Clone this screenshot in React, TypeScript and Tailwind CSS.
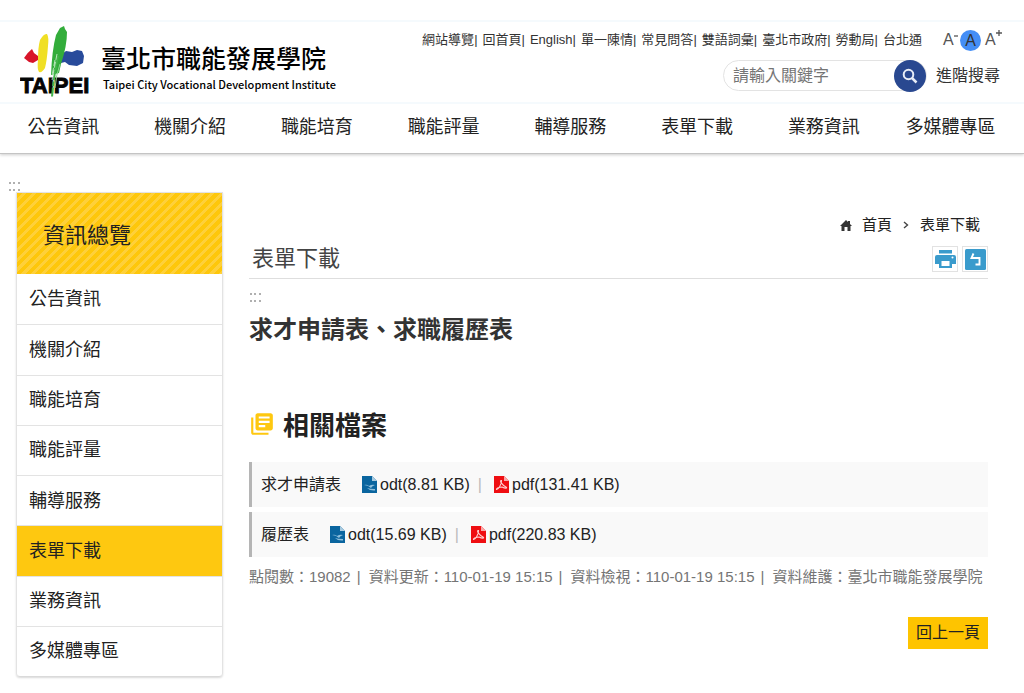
import React from 'react';

const topLinks = ['網站導覽', '回首頁', 'English', '單一陳情', '常見問答', '雙語詞彙', '臺北市政府', '勞動局', '台北通'];

const sections = ['公告資訊', '機關介紹', '職能培育', '職能評量', '輔導服務', '表單下載', '業務資訊', '多媒體專區'];

const files = [
  { name: '求才申請表', odt: '8.81 KB', pdf: '131.41 KB' },
  { name: '履歷表', odt: '15.69 KB', pdf: '220.83 KB' },
];

const meta = ['點閱數：19082', '資料更新：110-01-19 15:15', '資料檢視：110-01-19 15:15', '資料維護：臺北市職能發展學院'];

function TaipeiLogo() {
  return (
    <svg width="70" height="72" viewBox="0 0 70 72" aria-hidden="true">
      <path d="M4 32 Q8 26 12 23 L14 27 L18 30 L18 34 L13 37 L9 36 Z" fill="#d8152a" />
      <path d="M20 14 Q24 7 27 8 Q29 11 28 20 Q27 34 25 42 Q22 47 19 46 Q17 43 18 34 Q18 21 20 14Z" fill="#f0df25" />
      <path d="M42 28 L46 25 L52 26 L57 24 L62 25 L64 30 L63 37 L57 40 L49 39 L45 36 L41 37 L40 33 Z" fill="#284b9b" />
      <path d="M36 9 L40 2 L44 0 L45 3 L47 6 Q47 20 41 38 L39 47 L31 49 Q32 24 36 9Z" fill="#33ad3b" />
      <text x="0" y="67" fontFamily="'Liberation Sans', sans-serif" fontWeight="700" fontSize="22" fill="#050505" stroke="#050505" strokeWidth="0.9">TAIPEI</text>
      <path d="M38 30 Q34 48 32 71" stroke="#43b54a" strokeWidth="2" strokeDasharray="9 1 5 1" fill="none" />
      <path d="M40 38 Q36 49 35 62" stroke="#8ed391" strokeWidth="1" fill="none" />
      <path d="M37 28 L32 54M35 34L32 50" stroke="#d9f1da" strokeWidth="0.8" strokeDasharray="6 2" />
    </svg>
  );
}

function OdtIcon() {
  return (
    <svg width="15" height="17" viewBox="0 0 15 17" aria-hidden="true">
      <path d="M0 0H10L15 5V17H0Z" fill="#0a659f" />
      <path d="M10 0V5H15Z" fill="#a9cbe0" />
      <path d="M2 9Q5 8 7 10Q10 8 13 9Q10 10 9 12Q6 9 2 9ZM5 12Q8 13 13 13V14.500Q8 15 5 12Z" fill="#8fbfdc" />
    </svg>
  );
}

function PdfIcon() {
  return (
    <svg width="15" height="17" viewBox="0 0 15 17" aria-hidden="true">
      <path d="M0 0H10L15 5V17H0Z" fill="#ef0e12" />
      <path d="M10 0V5H15Z" fill="#f9a9a9" />
      <path d="M7 4.500C5.500 5 8 9 12 11C14 12.500 11 12.500 8 11C5.500 11 2 12.500 2.500 13.500C4 14 8 8 7.500 4.500Z" fill="none" stroke="#ffd0d0" strokeWidth="1.100" />
    </svg>
  );
}

function PrintIcon() {
  return (
    <svg width="21" height="19" viewBox="0 0 21 19" aria-hidden="true">
      <path d="M4 0H17V3.500H4ZM2 5H19Q21 5 21 7V14H17V10H4V14H0V7Q0 5 2 5Z" fill="#3a9bcc" />
      <path d="M4 9H17V18H4Z" fill="#3a9bcc" />
      <path d="M6.500 11H14.500V16H6.500Z" fill="#fff" />
      <circle cx="17.500" cy="7.500" r="1" fill="#fff" />
    </svg>
  );
}

function BackIcon() {
  return (
    <svg width="21" height="21" viewBox="0 0 21 21" aria-hidden="true">
      <rect width="21" height="21" rx="1.500" fill="#3a9bcc" />
      <path d="M8.500 4.500L6.500 9H14.500V15.500H10.500" fill="none" stroke="#fff" strokeWidth="1.900" />
    </svg>
  );
}

function AccessKey() {
  return (
    <a href="#content" className="block text-[#b0b0b0]" aria-label="定位點">
      <svg width="12" height="9" viewBox="0 0 12 9" fill="currentColor" aria-hidden="true">
        <path d="M1 0h2v2H1zM5 0h2v2H5zM10 0h2v2h-2zM1 7h2v2H1zM5 7h2v2H5zM10 7h2v2h-2z" />
      </svg>
    </a>
  );
}

function Header() {
  return (
    <header className="border-b border-[#c4c4c4] pt-5 shadow-[0_1px_3px_rgba(0,0,0,0.2)]">
      <div className="flex h-[84px] justify-between border-y-2 border-[#f5fafd] pl-5 pr-6">
        <a href="#home" className="flex gap-[11px] pt-1">
          <TaipeiLogo />
          <span className="flex flex-col pt-4 text-black">
            <span className="text-[25px] font-medium leading-[34px]">臺北市職能發展學院</span>
            <span className="pl-[2px] font-['Noto_Sans_CJK_TC',sans-serif] text-[11px] font-medium leading-4">Taipei City Vocational Development Institute</span>
          </span>
        </a>
        <div className="flex flex-col items-end gap-2 pt-[6px]">
          <div className="flex items-center">
            <ul className="flex gap-[5px] text-[13px] leading-6 text-[#333]">
              {topLinks.map((t, i) => (
                <li key={t} className="flex">
                  <a href="#link">{t}</a>
                  {i < topLinks.length - 1 && <span>|</span>}
                </li>
              ))}
            </ul>
            <div className="ml-[21px] flex items-center text-base text-[#555]">
              <button aria-label="縮小字級" className="flex w-[17px] items-start leading-6">
                A
                <svg className="mt-[5px]" width="5" height="6" viewBox="0 0 5 6" stroke="currentColor" strokeWidth="1.300" aria-hidden="true"><path d="M0 3H4" /></svg>
              </button>
              <button aria-label="一般字級" className="mr-1 size-[21px] rounded-full bg-[#448ef6] leading-[21px] text-[#333]">A</button>
              <button aria-label="放大字級" className="flex w-[15px] items-start leading-6">
                A
                <svg className="mt-[2px] shrink-0" width="6" height="6" viewBox="0 0 6 6" stroke="currentColor" strokeWidth="1.300" aria-hidden="true"><path d="M0 3H6M3 0V6" /></svg>
              </button>
            </div>
          </div>
          <form className="flex items-center" onSubmit={(e) => e.preventDefault()}>
            <div className="flex h-[31px] items-center rounded-full border border-[#e3e3e3]">
              <input aria-label="請輸入關鍵字" placeholder="請輸入關鍵字" className="w-[170px] bg-transparent pl-[9px] text-base text-[#333] outline-none placeholder:text-[#757575]" />
              <button aria-label="搜尋" className="flex size-8 items-center justify-center rounded-full bg-[#294890]">
                <svg width="16" height="16" viewBox="0 0 16 16" fill="none" stroke="#e8edf7" aria-hidden="true">
                  <circle cx="6.500" cy="6.500" r="4.800" strokeWidth="2" />
                  <path d="M10 10L14.500 14.500" strokeWidth="2.500" />
                </svg>
              </button>
            </div>
            <a href="#advanced" className="ml-[9px] text-base leading-6 text-[#333]">進階搜尋</a>
          </form>
        </div>
      </div>
      <nav className="grid h-[49px] grid-cols-8 items-center pb-1 pr-[10px] text-center text-lg leading-6 text-[#222]">
        {sections.map((s) => (
          <a key={s} href="#section">{s}</a>
        ))}
      </nav>
    </header>
  );
}

function Sidebar() {
  return (
    <aside className="w-[223px] shrink-0 pt-7">
      <div className="pb-px pl-2"><AccessKey /></div>
      <div className="ml-4 rounded-b-sm border border-[#e3e3e3] border-b-[#dadada] shadow-[0_1px_2px_rgba(0,0,0,0.15)]">
        <h2 className="flex h-[81px] items-center bg-[repeating-linear-gradient(135deg,#fec70b_0px,#fec70b_4px,#fed03a_4px,#fed03a_7px)] px-[26px] pt-1 text-[22px] text-[#222]">
          資訊總覽
        </h2>
        <ul className="grid min-h-[402px] auto-rows-fr text-lg leading-6 text-[#222]">
          {sections.map((s, i) => (
            <li key={s} className={i > 0 ? 'border-t border-[#e3e3e3]' : ''}>
              <a href="#section" className={s === '表單下載' ? 'flex h-full items-center bg-[#fec810] pl-3' : 'flex h-full items-center pl-3'}>
                {s}
              </a>
            </li>
          ))}
        </ul>
      </div>
    </aside>
  );
}

export default function App() {
  return (
    <div className="min-h-screen bg-white font-['Liberation_Sans','Noto_Sans_CJK_TC',sans-serif]">
      <Header />
      <div className="flex">
        <Sidebar />
        <main id="content" className="ml-[26px] mr-9 flex-1 pb-10 pt-[59px]">
          <nav className="flex items-center justify-end pr-2 text-[15px] leading-6 text-[#222]">
            <svg className="mr-[10px]" width="12" height="11" viewBox="0 0 12 11" fill="#333" aria-hidden="true">
              <path d="M6 0L8 2V1H10V4L12 6H10.500V11H7.500V7H4.500V11H1.500V6H0Z" />
            </svg>
            <a href="#home">首頁</a>
            <svg className="mx-[11px]" width="6" height="8" viewBox="0 0 6 8" fill="none" stroke="#444" strokeWidth="1.400" aria-hidden="true">
              <path d="M1 1L4.500 4L1 7" />
            </svg>
            <a href="#forms">表單下載</a>
          </nav>
          <div className="flex items-center justify-between border-b border-[#dedede] pb-[5px] pt-2">
            <h2 className="pl-[3px] text-[22px] leading-7 text-[#444]">表單下載</h2>
            <div className="flex gap-1">
              <button aria-label="友善列印" className="flex size-[26px] items-center justify-center border border-[#e2e2e2]"><PrintIcon /></button>
              <button aria-label="回上一頁" className="flex size-[26px] items-center justify-center border border-[#e2e2e2]"><BackIcon /></button>
            </div>
          </div>
          <div className="pt-[14px]"><AccessKey /></div>
          <h3 className="mt-3 text-2xl font-bold leading-8 text-[#333]">求才申請表、求職履歷表</h3>
          <section className="mt-[60px]">
            <h3 className="flex items-center gap-2 text-[26px] font-bold leading-10 text-[#222]">
              <svg className="mb-1" width="26" height="26" viewBox="0 0 24 24" fill="#fec810" aria-hidden="true">
                <path d="M4 6H2v14c0 1.100.900 2 2 2h14v-2H4V6zm16-4H8c-1.100 0-2 .900-2 2v12c0 1.100.900 2 2 2h12c1.100 0 2-.900 2-2V4c0-1.100-.900-2-2-2zm-1 9H9V9h10v2zm-4 4H9v-2h6v2zm4-8H9V5h10v2z" />
              </svg>
              相關檔案
            </h3>
            <ul className="mt-4 flex flex-col gap-[5px] text-base text-[#222]">
              {files.map((f) => (
                <li key={f.name} className="flex h-[45px] items-center border-l-[3px] border-[#b5b5b5] bg-[#f9f9f9] pl-[9px]">
                  <span>{f.name}</span>
                  <a href="#odt" className="ml-[21px] flex items-center gap-[3px]"><OdtIcon />odt({f.odt})</a>
                  <span className="ml-2 mr-3 text-[#bbb]">|</span>
                  <a href="#pdf" className="flex items-center gap-[3px]"><PdfIcon />pdf({f.pdf})</a>
                </li>
              ))}
            </ul>
          </section>
          <ul className="mt-2 flex whitespace-nowrap text-[15px] leading-6 text-[#757575]">
            {meta.map((m, i) => (
              <li key={m} className="flex">
                {m}
                {i < meta.length - 1 && <span className="ml-[6px] mr-2">|</span>}
              </li>
            ))}
          </ul>
          <div className="mt-7 flex justify-end">
            <a href="#back" className="bg-[#fec400] px-2 py-1 text-base leading-6 text-[#222]">回上一頁</a>
          </div>
        </main>
      </div>
    </div>
  );
}
